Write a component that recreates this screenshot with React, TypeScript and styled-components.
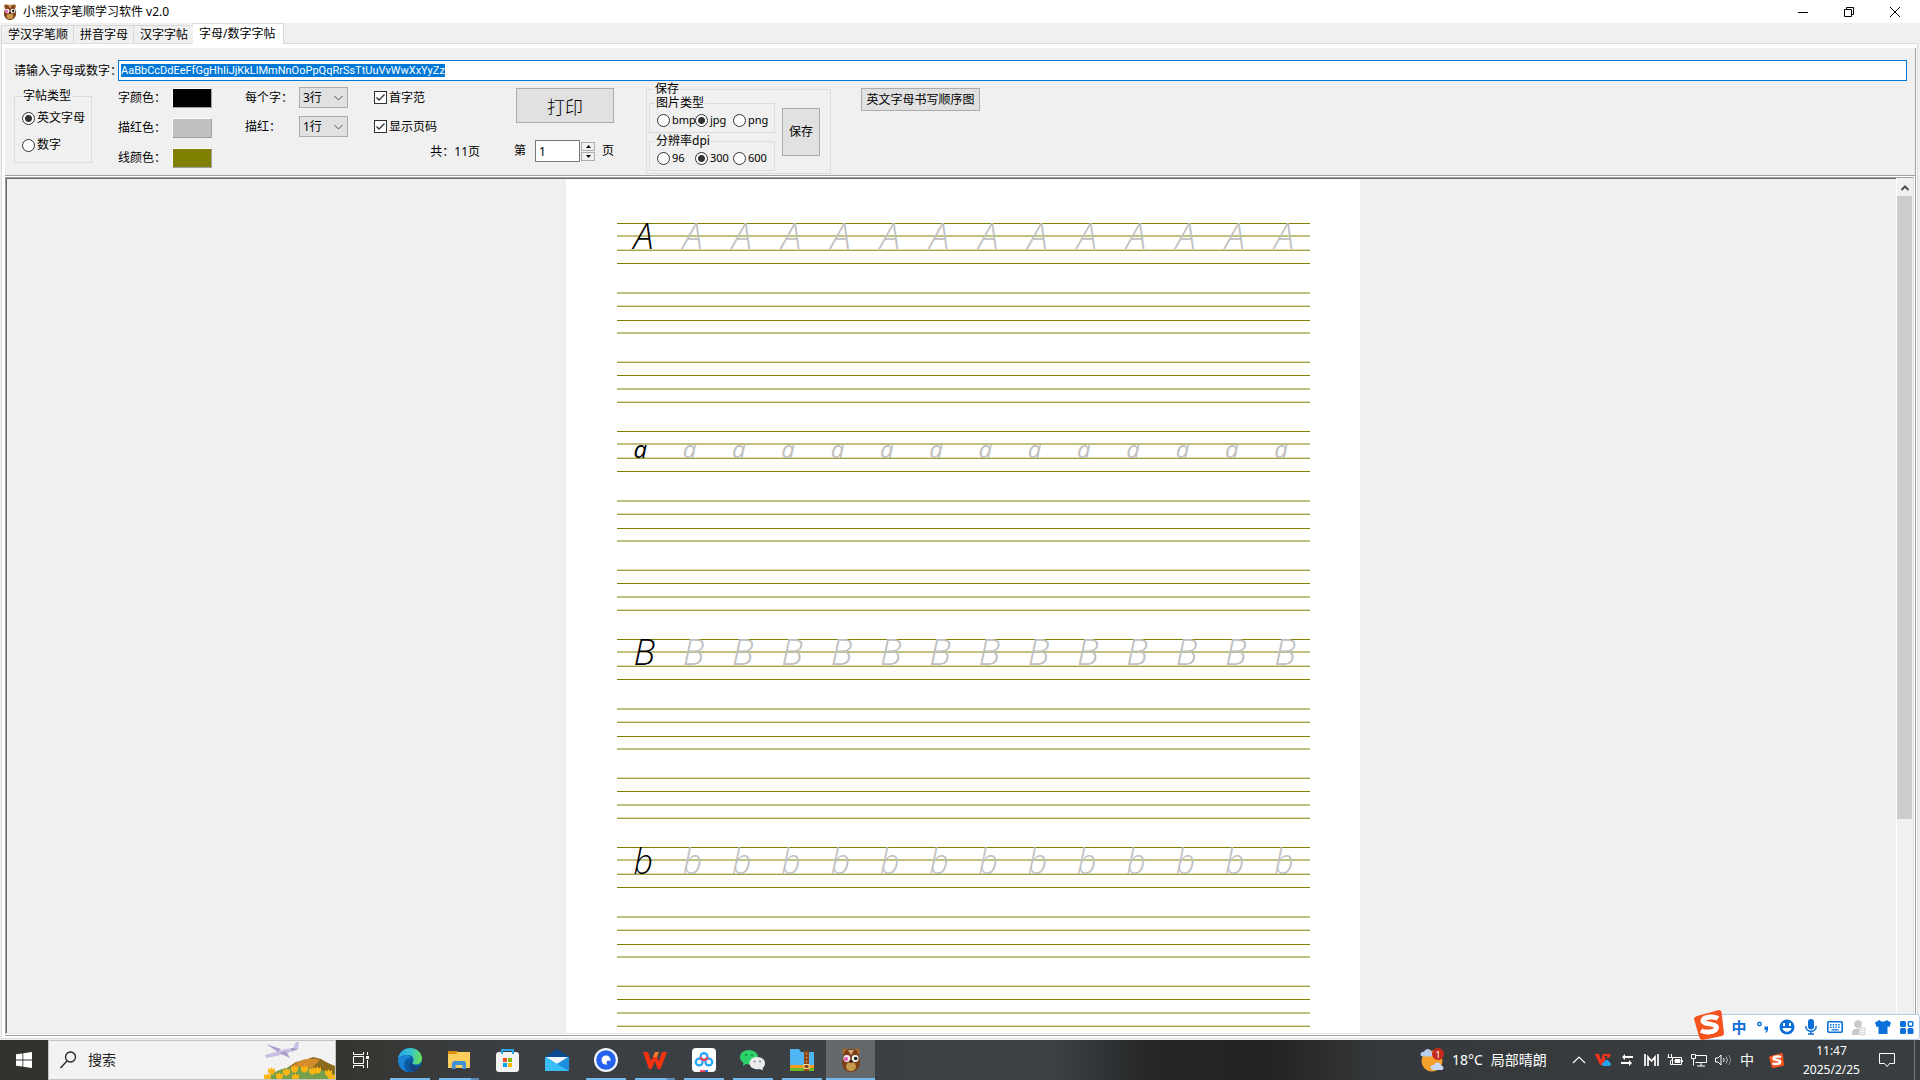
import React, { useEffect, useRef } from "react";
import styled, { createGlobalStyle } from "styled-components";

const Global = createGlobalStyle`
  *, *::before, *::after { box-sizing: border-box; }
  body { margin: 0; background: #f0f0f0; }
  body, button, input, select {
    font-family: "Noto Sans", "Noto Sans CJK SC", sans-serif;
    font-size: 12px;
    line-height: 14px;
    color: #000;
  }
  button { cursor: default; padding: 0; margin: 0; border: 0; background: none; }
`;

const Desktop = styled.div`
  height: 100vh;
  display: flex;
  flex-direction: column;
  overflow: hidden;
`;

/* ---------- window chrome ---------- */
const TitleBar = styled.header`
  height: 23px;
  flex: none;
  background: #fff;
  display: flex;
  align-items: center;
  padding: 0 2px;
  h1 { margin: 0 auto 0 5px; font-size: 12px; font-weight: 400; line-height: 14px; }
`;
const WinButton = styled.button`
  width: 46px;
  height: 20px;
  display: grid;
  place-items: center;
`;
const Tabs = styled.nav`
  height: 20px;
  flex: none;
  display: flex;
  align-items: flex-end;
  padding-left: 1px;
`;
const Tab = styled.button<{ $on?: boolean }>`
  height: ${p => (p.$on ? 21 : 18)}px;
  margin-bottom: ${p => (p.$on ? -1 : 0)}px;
  padding: 0 ${p => (p.$on ? 7 : 5)}px 0 6px;
  border: 1px solid #d9d9d9;
  border-bottom: 0;
  border-left-width: ${p => (p.$on ? 0 : 1)}px;
  border-right-width: ${p => (p.$on ? 1 : 0)}px;
  background: ${p => (p.$on ? "#fff" : "#f0f0f0")};
  white-space: nowrap;
  z-index: ${p => (p.$on ? 1 : 0)};
`;
const Frame = styled.main`
  flex: 1;
  min-height: 0;
  margin: 0 2px 1px 1px;
  padding: 4px 1px 2px 3px;
  border: 1px solid #dcdcdc;
  background: #fff;
  display: flex;
`;
const Panel = styled.div`
  flex: 1;
  min-width: 0;
  display: flex;
  flex-direction: column;
  border: solid #a0a0a0;
  border-width: 0 1px 1px 0;
`;

/* ---------- tool area ---------- */
const Tools = styled.form`
  flex: none;
  height: 128px;
  background: #f0f0f0;
  border-bottom: 1px solid #a0a0a0;
  padding: 12px 8px 0 9px;
`;
const EntryRow = styled.div`
  display: flex;
  align-items: center;
  label { width: 104px; white-space: nowrap; }
`;
const Entry = styled.input`
  flex: 1;
  height: 21px;
  border: 1px solid #0078d7;
  background: #fff;
  outline: 0;
  padding: 0 2px;
  font-family: Roboto, sans-serif;
  font-size: 11px;
  &::selection { background: #0078d7; color: #fff; }
`;
const Options = styled.div`
  display: grid;
  grid-template-columns: 104px 127px 129px 140px 132px 215px auto;
  justify-content: start;
  align-items: start;
  padding-top: 1px;
`;
const Column = styled.div<{ $gap?: number }>`
  display: grid;
  grid-auto-rows: 21px;
  row-gap: ${p => p.$gap || 8}px;
  padding-top: 5px;
  align-items: center;
`;
const Field = styled.label<{ $w: number }>`
  display: grid;
  grid-template-columns: ${p => p.$w}px auto;
  justify-content: start;
  align-items: center;
`;
const Swatch = styled.button<{ $c: string }>`
  width: 40px;
  height: 20px;
  border: 1px solid;
  border-color: #fff #a0a0a0 #a0a0a0 #fff;
  background: ${p => p.$c};
`;
const SelectBox = styled.span`
  display: grid;
  > * { grid-area: 1 / 1; }
  svg { justify-self: end; align-self: center; margin-right: 4px; pointer-events: none; }
`;
const Select = styled.select`
  appearance: none;
  width: 49px;
  height: 21px;
  padding: 0 3px;
  border: 1px solid #adadad;
  border-radius: 0;
  background: #e1e1e1;
`;
const Group = styled.fieldset<{ $w: number; $h: number }>`
  width: ${p => p.$w}px;
  height: ${p => p.$h}px;
  min-width: 0;
  margin: 0;
  padding: 0 7px;
  border: 1px solid #dcdcdc;
  > legend { padding: 0 1px; line-height: 14px; }
`;
const TypeGroup = styled(Group)`margin-top: 7px;`;
const InnerGroup = styled(Group)`> legend { margin-left: -2px; }`;
const RadioStack = styled.div`
  display: grid;
  gap: 13px;
  padding-top: 8px;
`;
const RadioLine = styled.div`
  display: grid;
  grid-template-columns: 38px 38px 38px;
  padding-top: 3px;
  font-size: 11px;
`;
const Choice = styled.label`
  display: flex;
  align-items: center;
  gap: 2px;
  white-space: nowrap;
`;
const Radio = styled.input`
  appearance: none;
  flex: none;
  width: 13px;
  height: 13px;
  margin: 0;
  border: 1px solid #333;
  border-radius: 50%;
  background: #fff;
  &:checked { background: radial-gradient(circle, #333 3px, #fff 4px); }
`;
const CheckBox = styled.span`
  display: grid;
  > * { grid-area: 1 / 1; }
  svg { pointer-events: none; }
  input {
    appearance: none;
    width: 13px;
    height: 13px;
    margin: 0;
    border: 1px solid #333;
    background: #fff;
  }
`;
const Total = styled.output`
  justify-self: end;
  align-self: start;
  margin-right: 34px;
`;
const Push = styled.button<{ $w: number; $h: number; $big?: boolean }>`
  width: ${p => p.$w}px;
  height: ${p => p.$h}px;
  border: 1px solid #adadad;
  background: #e1e1e1;
  ${p => (p.$big ? 'font: 300 18px "Noto Sans CJK SC", sans-serif;' : "")}
`;
const PrintColumn = styled.div`
  width: 100px;
  display: flex;
  flex-direction: column;
  align-items: flex-end;
  gap: 17px;
  padding-top: 6px;
`;
const Pager = styled.div`
  width: 100%;
  display: flex;
  align-items: center;
  white-space: nowrap;
  input { width: 45px; height: 22px; margin: 0 1px 0 9px; border: 1px solid #7a7a7a; padding: 0 3px; }
`;
const Spin = styled.div`
  display: grid;
  gap: 1px;
  margin-right: 7px;
  button { width: 14px; height: 9px; border: 1px solid #adadad; display: grid; place-items: center; }
`;
const SaveBody = styled.div`
  display: grid;
  grid-template-columns: 133px auto;
  align-items: start;
`;
const SaveGroup = styled(Group)`padding: 0 2px; > legend { margin-left: 5px; }`;
const SaveStack = styled.div`display: grid; gap: 1px;`;
const Below = styled.div<{ $top: number }>`padding-top: ${p => p.$top}px;`;

/* ---------- sheet ---------- */
const Viewer = styled.section`
  flex: 1;
  min-height: 0;
  margin: 1px 1px 1px 0;
  border: 1px solid;
  border-color: #a0a0a0 #e3e3e3 #e3e3e3 #a0a0a0;
  background: #f0f0f0;
  display: flex;
`;
const ViewerInner = styled.div`
  flex: 1;
  min-width: 0;
  border: solid #696969;
  border-width: 1px 0 0 1px;
  padding-left: 22px;
  display: flex;
  justify-content: center;
  overflow: hidden;
`;
const Sheet = styled.article`
  width: 794px;
  flex: none;
  min-height: 100%;
  padding: 43px 50px 0 51px;
  background: #fff;
`;
const StaveSet = styled.div`
  display: grid;
  grid-template-rows: 70px 69px 69px;
`;
const Stave = styled.div`
  display: grid;
  align-items: start;
  > * { grid-area: 1 / 1; }
`;
const Rules = styled.div`
  height: 42px;
  display: flex;
  flex-direction: column;
  justify-content: space-between;
`;
const inks = {
  s: ["#fff", "#808000"],
  h: ["#c0c080", "#c0c080"],
  t: ["#dfdfbf", "#a0a040"],
};
const Rule = styled.i<{ $k: keyof typeof inks }>`
  height: 2px;
  border-top: 1px solid ${p => inks[p.$k][0]};
  border-bottom: 1px solid ${p => inks[p.$k][1]};
`;
const Glyphs = styled.div<{ $size: number; $lh: number; $weight: number }>`
  display: grid;
  grid-template-columns: repeat(14, 1fr);
  padding: 0 3px 0 17px;
  margin-right: -17px;
  font: italic ${p => p.$weight} ${p => p.$size}px/${p => p.$lh}px "Open Sans", "Noto Sans", sans-serif;
  color: #c0c0c0;
  > :first-child { color: #000; }
`;
const ScrollBar = styled.div`
  width: 17px;
  border-left: 1px solid #fff;
  padding-top: 1px;
  display: flex;
  flex-direction: column;
  button { height: 17px; display: grid; place-items: center; }
`;
const Thumb = styled.div`
  height: 73%;
  width: 15px;
  background: #cdcdcd;
`;

/* ---------- taskbar ---------- */
const Taskbar = styled.footer`
  height: 40px;
  flex: none;
  display: flex;
  color: #fff;
  background: linear-gradient(90deg, #33322e 0, #36342f 18%, #3a3e42 25%, #3b4145 55%, #252626 60%, #222 66%, #36393b 72%, #393e41 100%);
`;
const Task = styled.button<{ $line?: boolean; $on?: boolean; $split?: boolean }>`
  width: 49px;
  height: 40px;
  display: grid;
  place-items: center;
  background: ${p => (p.$on ? "#63686b" : "none")};
  &::after {
    content: "";
    grid-area: 1 / 1;
    align-self: end;
    width: ${p => (p.$on ? 49 : 40)}px;
    height: ${p => (p.$line ? 2 : 0)}px;
    background: ${p => (p.$split ? "linear-gradient(90deg, #76b9ed 80%, #5a8bb5 80%)" : "#76b9ed")};
  }
  svg { grid-area: 1 / 1; }
`;
const Start = styled(Task)`width: 48px;`;
const Search = styled.label`
  width: 288px;
  height: 40px;
  border: 1px solid #c4c4c4;
  background: #f2f2f2;
  display: flex;
  align-items: center;
  padding-left: 9px;
  input {
    flex: 1;
    min-width: 0;
    margin-left: 10px;
    padding: 0;
    border: 0;
    background: none;
    font-size: 14px;
    line-height: 20px;
    outline: 0;
    &::placeholder { color: #222; opacity: 1; }
  }
`;
const Weather = styled.button`
  display: flex;
  align-items: center;
  gap: 8px;
  margin-left: auto;
  color: #fff;
  font-size: 14px;
  line-height: 20px;
  width: 147px;
`;
const TrayItem = styled.button<{ $w?: number }>`
  width: ${p => p.$w || 24}px;
  height: 40px;
  display: grid;
  place-items: center;
  color: #fff;
  font-size: 14px;
`;
const Clock = styled.time`
  width: 77px;
  text-align: center;
  font-size: 12px;
  line-height: 19px;
  padding-top: 1px;
`;
const ShowDesktop = styled.button`
  width: 6px;
  margin-left: 10px;
  border-left: 1px solid #75797b;
`;
const Ime = styled.aside`
  position: fixed;
  right: 0;
  bottom: 40px;
  width: 215px;
  height: 26px;
  padding: 0 0 0 21px;
  border: 1px solid #b5cdea;
  border-radius: 3px;
  background: #fff;
  display: flex;
  button { flex: 1; display: grid; place-items: center; color: #0a6fd8; font-size: 15px; font-weight: 700; }
`;
const ImeLogo = styled.div`
  position: absolute;
  left: -12px;
  bottom: -1px;
  height: 30px;
`;

/* ---------- drawings ---------- */
const Bear = ({ size }: { size: number }) => (
  <svg width={size} height={size} viewBox="0 0 24 24">
    <circle cx="6" cy="3.500" r="3" fill="#a8682c" /><circle cx="18" cy="3.500" r="3" fill="#a8682c" />
    <path d="M12 1c5 0 6.500 2 7.500 6 1 3 1.500 5 1.500 8 0 5-4 9-9 9s-9-4-9-9c0-3 .5-5 1.500-8C5.500 3 7 1 12 1z" fill="#7d3f1a" />
    <path d="M9 2l3 5 3-5z" fill="#d9a878" />
    <ellipse cx="12" cy="18.500" rx="5" ry="4.500" fill="#c69a4e" />
    <circle cx="7.800" cy="10.500" r="3.400" fill="#f7e9f3" /><circle cx="16.200" cy="10.500" r="3.400" fill="#eef6f3" />
    <circle cx="7" cy="11" r="2" fill="#e455b4" /><circle cx="16.700" cy="10.500" r="1.800" fill="#1b1b22" />
    <ellipse cx="12" cy="13.500" rx="1.800" ry="1.200" fill="#2a140a" />
  </svg>
);
const Chevron = () => (
  <svg width="11" height="8" viewBox="0 0 11 8"><path d="M1.500 2l4 4 4-4" fill="none" stroke="#555" /></svg>
);
const SLogo = ({ size }: { size: number }) => (
  <svg width={size} height={size} viewBox="0 0 30 30">
    <path d="M3 6L25 0q2 0 2.500 2l2.500 21q0 2-2 3L9 30q-3 0-3.500-2L0 9q0-2 3-3z" fill="#f4531d" />
    <path d="M24 8.500c-3-2-13-2.500-15 1.500-1.500 5 14 3 13.500 7.500-.5 5-11 5.500-15.500 3" fill="none" stroke="#fff" strokeWidth="4.800" />
  </svg>
);
const Arrow = ({ down }: { down?: boolean }) => (
  <svg width="5" height="3" viewBox="0 0 5 3"><path d={down ? "M0 0h5L2.500 3z" : "M0 3h5L2.500 0z"} fill="#000" /></svg>
);

const icons: Record<string, React.ReactNode> = {
  view: <svg width="18" height="18" viewBox="0 0 18 18" fill="none" stroke="#fff"><path d="M1.500 1v2.500h10V1M1.500 17v-2.500h10V17M1.500 5.500h10v7h-10zM15.500 1v3M15.500 9v8" /><path d="M14 5h3v3h-3z" fill="#fff" stroke="none" /></svg>,
  edge: <svg width="24" height="24" viewBox="0 0 24 24">
    <defs><linearGradient id="eg" x1="0" y1=".3" x2="1" y2=".4"><stop offset="0" stopColor="#2ba4e6" /><stop offset=".5" stopColor="#35c1d0" /><stop offset="1" stopColor="#6be05a" /></linearGradient></defs>
    <circle cx="12" cy="12" r="12" fill="#0c59a4" />
    <path d="M0 11C1 4 6 0 12 0c7 0 12 5 12 10.500 0 4-3 6-6 6-2.500 0-4-.8-3.500-2 .8-1 1-1.500 1-2.700C15.500 9 13 7 9 7c-4 0-7 1.500-9 4z" fill="url(#eg)" />
    <path d="M9 7C5 7 1 9 0 12c0 7 5 12 11 12-5-1.500-6.500-8-3-12 1.200-1.600 3-2.200 4.500-1.800C12.500 8 11 7 9 7z" fill="#1b83d5" />
    <path d="M12.800 14c.7 3.500 4.500 5.200 9.700 3.800-1.200 2.500-3.500 4.500-6 5.300-5-.6-6.500-6-3.700-9.100z" fill="#17427d" />
  </svg>,
  files: <svg width="22" height="18" viewBox="0 0 22 18"><path d="M0 0h8l2 1h12v16H0z" fill="#f9ce5c" /><path d="M0 0h8l1.500 1.500L8 3H0z" fill="#d98f0b" /><path d="M4 18v-6l1.500-2h11l1.500 2v6h-3.500v-4h-7v4z" fill="#3d8fd6" /></svg>,
  store: <svg width="23" height="24" viewBox="0 0 23 24"><rect y="4" width="23" height="20" rx="3" fill="#f2f2f2" /><path d="M6 6V2h11v4" fill="none" stroke="#25a7ea" strokeWidth="2" /><path d="M7 10h4v4H7z" fill="#f25022" /><path d="M12 10h4v4h-4z" fill="#7fba00" /><path d="M7 15h4v4H7z" fill="#00a4ef" /><path d="M12 15h4v4h-4z" fill="#ffb900" /></svg>,
  mail: <svg width="24" height="22" viewBox="0 0 24 22"><path d="M0 8l12-8 12 8z" fill="#0a4c94" /><path d="M0 8h24v14H0z" fill="#2aa7ec" /><path d="M1 8h22l-11 7z" fill="#f3f7fb" /><path d="M0 8l24 14H0z" fill="#38bdf5" /><path d="M24 8v14L12 15z" fill="#1d8fdc" /></svg>,
  quark: <svg width="24" height="24" viewBox="0 0 24 24"><circle cx="12" cy="12" r="12" fill="#f3f5fa" /><circle cx="12" cy="12" r="9.800" fill="#2563ef" /><circle cx="12" cy="12" r="4.500" fill="#fff" /><circle cx="14.500" cy="14.500" r="2" fill="#2563ef" /></svg>,
  wps: <svg width="24" height="17" viewBox="0 0 24 17"><path d="M0 0h5l3 9 3-6h3l1.500 7L19 0h5l-6.500 17h-3L12 9l-3.500 8H6z" fill="#f3330f" /><path d="M12 0h4l-2 5h-4z" fill="#ff7a2e" /></svg>,
  pan: <svg width="24" height="24" viewBox="0 0 24 24"><rect width="24" height="24" rx="4" fill="#fff" /><g fill="none" strokeWidth="2.200"><circle cx="7.200" cy="14" r="3.400" stroke="#22a4f5" /><circle cx="16.800" cy="14" r="3.400" stroke="#22a4f5" /><circle cx="12" cy="8.500" r="3.400" stroke="#22a4f5" /><path d="M8.600 9c.5 4 6.300 4 6.800 0" stroke="#f0445a" /></g><path d="M8 22h5v2H8z" fill="#f0445a" /><path d="M13 22h3v2h-3z" fill="#2878f0" /></svg>,
  chat: <svg width="25" height="24" viewBox="0 0 25 24"><path d="M9 2c5 0 9 3 9 7s-4 7.500-9 7.500c-1 0-2-.2-3-.5L3 18l.5-3C1.500 13.500 0 11.500 0 9c0-4 4-7 9-7z" fill="#2bd267" /><path d="M17 9c4.500 0 8 2.700 8 6.200 0 2-1 3.800-2.500 4.800l.5 2.500-3-1.500c-5.500 1-10.500-1.500-10.500-5.800C9.500 11.700 12.500 9 17 9z" fill="#ececec" /><g fill="#14803a"><circle cx="6" cy="7" r="1" /><circle cx="12" cy="7" r="1" /></g><g fill="#888"><circle cx="14.500" cy="13.500" r="1" /><circle cx="20" cy="13.500" r="1" /></g></svg>,
  zip: <svg width="24" height="22" viewBox="0 0 24 22"><path d="M0 0h9l2 3h13v14H0z" fill="#4fb6f3" /><path d="M0 16h24v4H0z" fill="#f39a1d" /><path d="M0 19h24v3H0z" fill="#6cb82d" /><path d="M14 2h5v20h-5z" fill="#8d4a17" /><path d="M16.500 4v1M16.500 8v1M16.500 12v1" stroke="#f1d6a0" /><path d="M14 15.500h5v4h-5z" fill="none" stroke="#f7df9c" /></svg>,
  bear: <Bear size={24} />,
};
const tasks: [string, string, boolean, boolean?][] = [
  ["view", "任务视图", false], ["edge", "Edge", true], ["files", "文件资源管理器", true, true], ["store", "Store", false],
  ["mail", "邮件", false], ["quark", "浏览器", true], ["wps", "WPS", true, true], ["pan", "网盘", true],
  ["chat", "微信", true], ["zip", "压缩", true], ["bear", "小熊汉字笔顺学习软件", true],
];

const tulips = [[7, 30], [15, 35], [22, 31], [30, 28], [3, 36], [40, 28], [48, 30], [53, 29], [64, 32], [67, 36], [31, 36]];
const SearchArt = () => (
  <svg width="71" height="38" viewBox="0 0 71 38">
    <path d="M20 29l12-8 9-2 8-3 8 2 7 4 7 3v13H20z" fill="#8a6a1e" />
    <path d="M26 27c8-8 18-11 30-8l-8 8z" fill="#d48b2c" />
    <path d="M0 38c8-7 20-13 36-12s28 4 35 8v4z" fill="#74a04e" />
    <g fill="#fdb515">
      {tulips.map(([x, y]) => (
        <path key={`${x}-${y}`} d={`M${x - 3} ${y - 3}l2 1.500 1.500-2.500 1.500 2.500 2-1.500v4l-2 2.500h-3l-2-2.500z`} />
      ))}
    </g>
    <path d="M1 14c8-2 17-6 28-7l3-6h3l-1 7c-8 4-20 7-32 9z" fill="#c9bfe0" />
    <path d="M2 3l15 5-3 3zM15 12l11 5-4-7z" fill="#a9a0cc" />
    <path d="M27 7l7 1-6 2z" fill="#9e93c4" />
  </svg>
);

const glyphRows = [
  { ch: "A", size: 36, lh: 28, weight: 300 },
  { ch: "a", size: 24, lh: 38, weight: 400 },
  { ch: "B", size: 36, lh: 28, weight: 300 },
  { ch: "b", size: 34, lh: 30, weight: 300 },
];
const patterns: (keyof typeof inks)[][] = [["s", "h", "t", "s"], ["h", "t", "s", "h"], ["t", "s", "h", "t"]];

function PracticeSheet() {
  return (
    <Sheet>
      {glyphRows.map(row => (
        <StaveSet key={row.ch}>
          {patterns.map((kinds, n) => (
            <Stave key={n}>
              <Rules>{kinds.map((k, i) => <Rule key={i} $k={k} />)}</Rules>
              {n === 0 && (
                <Glyphs $size={row.size} $lh={row.lh} $weight={row.weight}>
                  {Array.from({ length: 14 }, (_, i) => <span key={i}>{row.ch}</span>)}
                </Glyphs>
              )}
            </Stave>
          ))}
        </StaveSet>
      ))}
    </Sheet>
  );
}

const Option = ({ name, text, on }: { name: string; text: string; on?: boolean }) => (
  <Choice><Radio type="radio" name={name} defaultChecked={on} />{text}</Choice>
);
const Check = ({ text }: { text: string }) => (
  <Choice>
    <CheckBox>
      <input type="checkbox" defaultChecked />
      <svg width="13" height="13" viewBox="0 0 13 13"><path d="M2.500 6.500L5 9l5.500-5.500" fill="none" stroke="#333" strokeWidth="1.300" /></svg>
    </CheckBox>
    {text}
  </Choice>
);
const Combo = ({ label, value }: { label: string; value: string }) => (
  <Field $w={54}>
    {label}
    <SelectBox><Select defaultValue={value}><option>{value}</option></Select><Chevron /></SelectBox>
  </Field>
);

function ToolArea() {
  const entry = useRef<HTMLInputElement>(null);
  useEffect(() => {
    entry.current?.focus();
    entry.current?.select();
  }, []);
  return (
    <Tools onSubmit={e => e.preventDefault()}>
      <EntryRow>
        <label htmlFor="entry">请输入字母或数字：</label>
        <Entry id="entry" ref={entry} spellCheck={false} defaultValue="AaBbCcDdEeFfGgHhIiJjKkLlMmNnOoPpQqRrSsTtUuVvWwXxYyZz" />
      </EntryRow>
      <Options>
        <TypeGroup $w={78} $h={74}>
          <legend>字帖类型</legend>
          <RadioStack>
            <Option name="kind" text="英文字母" on />
            <Option name="kind" text="数字" />
          </RadioStack>
        </TypeGroup>
        <Column $gap={9}>
          <Field $w={54}>字颜色：<Swatch type="button" $c="#000" /></Field>
          <Field $w={54}>描红色：<Swatch type="button" $c="#c0c0c0" /></Field>
          <Field $w={54}>线颜色：<Swatch type="button" $c="#808000" /></Field>
        </Column>
        <Column>
          <Combo label="每个字：" value="3行" />
          <Combo label="描红：" value="1行" />
        </Column>
        <Column>
          <Check text="首字范" />
          <Check text="显示页码" />
          <Total>共：11页</Total>
        </Column>
        <PrintColumn>
          <Push type="button" $w={98} $h={35} $big>打印</Push>
          <Pager>
            <label htmlFor="page">第</label>
            <input id="page" defaultValue="1" />
            <Spin>
              <button type="button" aria-label="上一页"><Arrow /></button>
              <button type="button" aria-label="下一页"><Arrow down /></button>
            </Spin>
            <span>页</span>
          </Pager>
        </PrintColumn>
        <SaveGroup $w={185} $h={92}>
          <legend>保存</legend>
          <SaveBody>
            <SaveStack>
              <InnerGroup $w={126} $h={37}>
                <legend>图片类型</legend>
                <RadioLine>
                  <Option name="format" text="bmp" />
                  <Option name="format" text="jpg" on />
                  <Option name="format" text="png" />
                </RadioLine>
              </InnerGroup>
              <InnerGroup $w={126} $h={37}>
                <legend>分辨率dpi</legend>
                <RadioLine>
                  <Option name="dpi" text="96" />
                  <Option name="dpi" text="300" on />
                  <Option name="dpi" text="600" />
                </RadioLine>
              </InnerGroup>
            </SaveStack>
            <Below $top={12}><Push type="button" $w={38} $h={48}>保存</Push></Below>
          </SaveBody>
        </SaveGroup>
        <Below $top={6}><Push type="button" $w={119} $h={23}>英文字母书写顺序图</Push></Below>
      </Options>
    </Tools>
  );
}

function ImeBar() {
  return (
    <Ime>
      <ImeLogo><SLogo size={30} /></ImeLogo>
      <button>中</button>
      <button aria-label="标点"><svg width="12" height="12" viewBox="0 0 12 12"><circle cx="2.500" cy="3" r="1.700" fill="none" stroke="#0a6fd8" strokeWidth="1.400" /><path d="M7.500 5.500h3.500v3c0 2-1 3-2.500 3.300V10.500c.7-.2 1-.7 1-1.500h-2z" fill="#0a6fd8" /></svg></button>
      <button aria-label="表情"><svg width="16" height="16" viewBox="0 0 16 16"><circle cx="8" cy="8" r="7.500" fill="#0a6fd8" /><path d="M4 4h2v3H4zM10 4h2v3h-2zM3.500 9h9c-.5 5-8.500 5-9 0z" fill="#fff" /></svg></button>
      <button aria-label="语音"><svg width="12" height="16" viewBox="0 0 12 16"><rect x="3" width="6" height="10.500" rx="3" fill="#0a6fd8" /><path d="M.8 7c0 7 10.400 7 10.400 0M6 12v3M3 15h6" fill="none" stroke="#0a6fd8" strokeWidth="1.500" /></svg></button>
      <button aria-label="键盘"><svg width="16" height="12" viewBox="0 0 16 12"><rect x=".8" y=".8" width="14.400" height="10.400" rx="1" fill="none" stroke="#0a6fd8" strokeWidth="1.600" /><path d="M3 3.800h10M3 6.200h10" stroke="#0a6fd8" strokeWidth="1.400" strokeDasharray="1.500 1.200" /><path d="M4.500 8.800h7" stroke="#0a6fd8" strokeWidth="1.300" /></svg></button>
      <button aria-label="账户"><svg width="14" height="15" viewBox="0 0 14 15" fill="#c9c9c9"><circle cx="6" cy="4" r="3.800" /><path d="M0 15v-2c0-3 2-4.500 7-4.500V15z" /><path d="M8 8h5v6.500H8z" stroke="#c9c9c9" fill="#fff" /><path d="M9.500 10h2v1h-2zM9.500 12h2v1h-2z" /></svg></button>
      <button aria-label="皮肤"><svg width="16" height="14" viewBox="0 0 16 14"><path d="M4.500 0C6 2 10 2 11.500 0L16 2.500 14.500 7l-2-.5V14h-9V6.500l-2 .5L0 2.500z" fill="#0a6fd8" /></svg></button>
      <button aria-label="工具箱"><svg width="14" height="13" viewBox="0 0 14 13"><g fill="#0a6fd8"><rect width="6" height="6" rx="1.500" /><rect y="7" width="6" height="6" rx="1.500" /><rect x="7.500" y="7" width="6" height="6" rx="1.500" /></g><rect x="8.300" y=".8" width="4.500" height="4.500" rx="1" fill="none" stroke="#0a6fd8" strokeWidth="1.500" /></svg></button>
    </Ime>
  );
}

function BottomBar() {
  return (
    <Taskbar>
      <Start aria-label="开始">
        <svg width="16" height="16" viewBox="0 0 16 16" fill="#fff"><path d="M0 2.300L6.500 1.400v6.200H0zM7.300 1.300L16 0v7.600H7.300zM0 8.400h6.500v6.200L0 13.700zM7.300 8.400H16V16l-8.700-1.300z" /></svg>
      </Start>
      <Search>
        <svg width="20" height="20" viewBox="0 0 20 20" fill="none" stroke="#222" strokeWidth="1.300"><circle cx="12.500" cy="7" r="5" /><path d="M9 11l-6.500 7" /></svg>
        <input placeholder="搜索" aria-label="搜索" />
        <SearchArt />
      </Search>
      {tasks.map(([k, label, line, split]) => (
        <Task key={k} aria-label={label} $line={line} $split={split} $on={k === "bear"}>{icons[k]}</Task>
      ))}
      <Weather>
        <svg width="24" height="24" viewBox="0 0 24 24"><circle cx="12" cy="13" r="10.500" fill="#f5a02c" /><path d="M1 8c-1.500-3 1-5 3-4 1-4 7-4 7 0 3 0 3 4 0 4.500H3z" fill="#b9cdf0" /><path d="M11 21c-1.500-3 1-4.500 3-4 1-4 7-3 7 .5 3 0 3.500 4.500 0 4.500h-8z" fill="#c6d8f6" /><circle cx="18" cy="6" r="6" fill="#c42b1c" /><text x="18" y="9.500" fill="#fff" fontSize="9" textAnchor="middle" fontFamily="Noto Sans">1</text></svg>
        <span>18°C</span>
        <span>局部晴朗</span>
      </Weather>
      <TrayItem aria-label="显示隐藏的图标"><svg width="14" height="8" viewBox="0 0 14 8"><path d="M1 7l6-6 6 6" fill="none" stroke="#fff" strokeWidth="1.200" /></svg></TrayItem>
      <TrayItem aria-label="WPS"><svg width="16" height="12" viewBox="0 0 16 12"><path d="M0 0h4l2 6 2-6h8l-2 4h-3l-3 7H5z" fill="#f3331a" /><path d="M9 2h4l-2 3z" fill="#3a3e42" /><path d="M8 12c-2-1-1-4 1.500-4 1-3 4-3 4.500 0 2.500 0 2.500 4 0 4z" fill="#25a3f0" /></svg></TrayItem>
      <TrayItem aria-label="同步"><svg width="14" height="12" viewBox="0 0 14 12"><path d="M4 3h9M1 9h8" stroke="#fff" strokeWidth="2" /><path d="M2 3l3-3v6zM12 9L9 6v6z" fill="#fff" /></svg></TrayItem>
      <TrayItem aria-label="监控"><svg width="15" height="12" viewBox="0 0 15 12"><path d="M1 0v12M14 0v12M4 12V3l3.500 4L11 3v9" fill="none" stroke="#fff" strokeWidth="1.700" /></svg></TrayItem>
      <TrayItem aria-label="电池"><svg width="17" height="13" viewBox="0 0 17 13" fill="none" stroke="#fff"><path d="M5.500 3.500h9v7h-9zM15.500 6v2" /><path d="M8 5.500h5v3H8z" fill="#fff" /><path d="M1.500 0v3M4.500 0v3M.5 3.500h5v2l-2 1v4H5" /></svg></TrayItem>
      <TrayItem aria-label="网络"><svg width="16" height="14" viewBox="0 0 16 14" fill="none" stroke="#fff"><path d="M4.500 2.500h11v7h-11M10 10v3M6 13h8M.5 1.500h4v4h-4zM2.500 5.500v7" /></svg></TrayItem>
      <TrayItem aria-label="音量"><svg width="17" height="14" viewBox="0 0 17 14" fill="none" stroke="#fff"><path d="M.5 5v4h2.500l3 3V2L3 5z" /><path d="M8.500 5q1.500 2 0 4" /><path d="M11 3.500q3 3.500 0 7" stroke="#bbb" /><path d="M13.500 2q4 5 0 10" stroke="#888" /></svg></TrayItem>
      <TrayItem>中</TrayItem>
      <TrayItem $w={34} aria-label="搜狗输入法"><SLogo size={15} /></TrayItem>
      <Clock>11:47<br />2025/2/25</Clock>
      <TrayItem $w={34} aria-label="通知"><svg width="16" height="16" viewBox="0 0 16 16"><path d="M.5 1.500h15v10h-5l-2.500 3-2.500-3h-5z" fill="none" stroke="#fff" /></svg></TrayItem>
      <ShowDesktop aria-label="显示桌面" />
    </Taskbar>
  );
}

export default function App() {
  return (
    <Desktop>
      <Global />
      <TitleBar>
        <Bear size={16} />
        <h1>小熊汉字笔顺学习软件 v2.0</h1>
        <WinButton aria-label="最小化"><svg width="10" height="10"><path d="M0 5.500h10" stroke="#000" /></svg></WinButton>
        <WinButton aria-label="还原"><svg width="10" height="10" fill="none" stroke="#000"><path d="M.5 2.500h7v7h-7zM2.500 2.500v-2h7v7h-2" /></svg></WinButton>
        <WinButton aria-label="关闭"><svg width="10" height="10"><path d="M0 0l10 10M10 0L0 10" stroke="#000" /></svg></WinButton>
      </TitleBar>
      <Tabs>
        <Tab>学汉字笔顺</Tab>
        <Tab>拼音字母</Tab>
        <Tab>汉字字帖</Tab>
        <Tab $on>字母/数字字帖</Tab>
      </Tabs>
      <Frame>
        <Panel>
          <ToolArea />
          <Viewer>
            <ViewerInner><PracticeSheet /></ViewerInner>
            <ScrollBar>
              <button aria-label="向上滚动"><svg width="8" height="6" viewBox="0 0 8 6"><path d="M.5 5L4 1.500 7.500 5" fill="none" stroke="#505050" strokeWidth="2" /></svg></button>
              <Thumb />
            </ScrollBar>
          </Viewer>
        </Panel>
      </Frame>
      <BottomBar />
      <ImeBar />
    </Desktop>
  );
}
